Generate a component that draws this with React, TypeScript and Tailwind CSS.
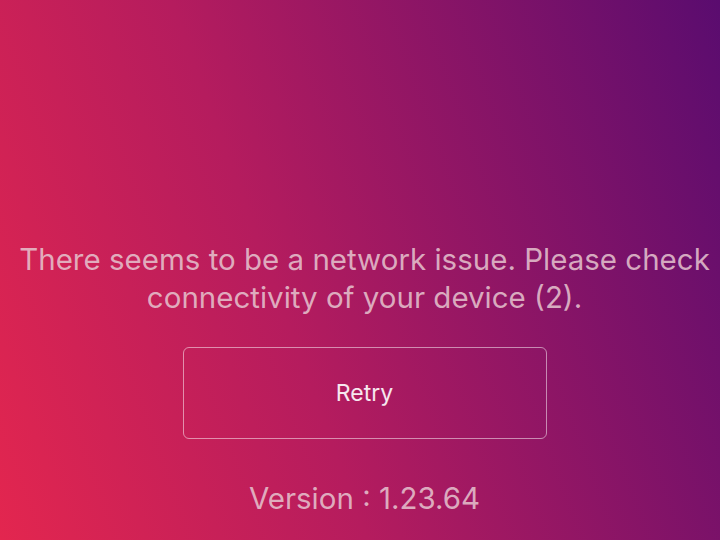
export default function App() {
  return (
    <div
      className="w-[720px] h-[540px] overflow-hidden flex flex-col items-center pl-[9px] bg-[linear-gradient(70deg,#e3264f_0%,#b51c5e_40%,#5a0c6f_100%)]"
      style={{ fontFamily: 'Inter, Roboto, "Noto Sans", sans-serif' }}
    >
      <div className="mt-[240px] text-center text-[29.5px] leading-[38px] text-[#e6c6d0]/85 whitespace-nowrap">
        There seems to be a network issue. Please check
        <br />
        connectivity of your device (2).
      </div>
      <button className="mt-[31px] w-[364px] h-[92px] rounded-[6px] border-[1.5px] border-white/50 text-white/90 text-[23px] flex items-center justify-center">
        Retry
      </button>
      <div className="mt-[40px] text-[29.5px] leading-[38px] text-[#e6c6d0]/85">Version : 1.23.64</div>
    </div>
  );
}
